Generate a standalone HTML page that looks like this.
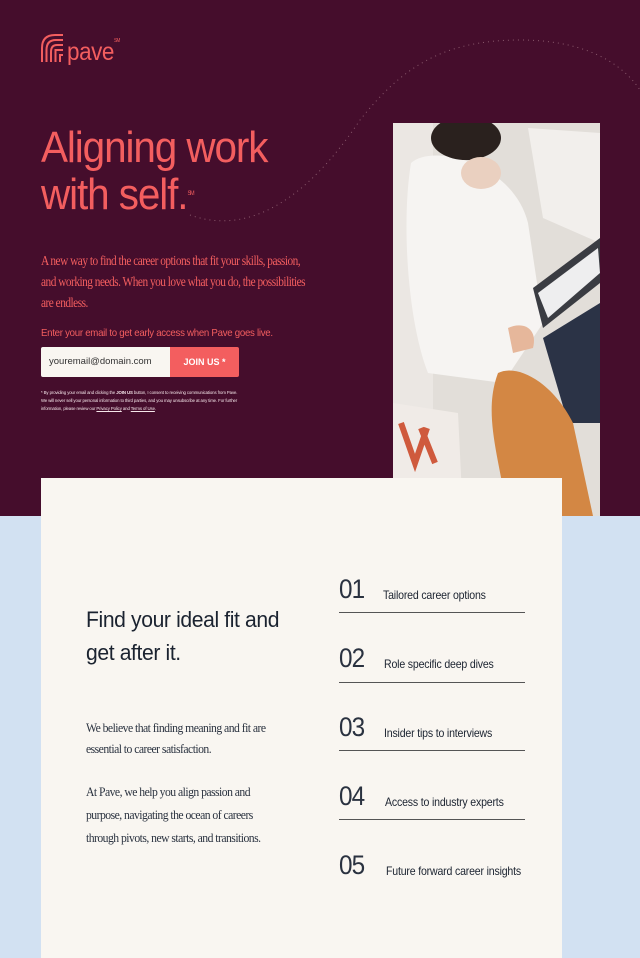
<!DOCTYPE html>
<html><head><meta charset="utf-8"><style>
*{margin:0;padding:0;box-sizing:border-box}
body{width:640px;height:958px;position:relative;overflow:hidden;font-family:"Liberation Sans",sans-serif;background:#d2e1f2}
.top{position:absolute;left:0;top:0;width:640px;height:516px;background:#450d2c}
.abs{position:absolute;white-space:nowrap;transform-origin:0 0}
.coral{color:#f35e5f}
.serif{font-family:"Liberation Serif",serif}
.card{position:absolute;left:41px;top:478px;width:521px;height:480px;background:#f9f6f1}
.num{position:absolute;left:339px;font-size:27px;color:#2a3240;letter-spacing:-1px;transform:scaleX(.9);transform-origin:0 0}
.lab{position:absolute;font-size:12px;color:#1b2330;letter-spacing:-0.2px;transform:scaleX(.88);transform-origin:0 0;white-space:nowrap}
.line{position:absolute;left:339px;width:186px;height:1px;background:#555}
</style></head><body>
<div class="top"></div>
<svg class="abs" style="left:0;top:0" width="640" height="516">
<path d="M190 215 C260 240 320 180 360 120 C400 70 440 40 520 40 C580 40 620 60 640 90" fill="none" stroke="#8a5a6d" stroke-width="1" stroke-dasharray="1 4"/>
<g fill="none" stroke="#f35e5f" stroke-width="2">
<path d="M42 62 V48 Q42 35 55 35 H63"/><path d="M46.5 62 V50 Q46.5 40 56 40 H63"/><path d="M51 62 V52 Q51 45 57 45 H63"/><path d="M55.5 62 V50 H63"/><path d="M60 62 V55 H63"/>
</g>
</svg>
<div class="abs coral" style="left:67px;top:38px;font-size:25px;letter-spacing:-0.5px;transform:scaleX(.9)">pave<sup style="font-size:5px;vertical-align:top">SM</sup></div>
<div class="abs coral" style="left:41px;top:124px;font-size:44px;line-height:47px;letter-spacing:-1.2px;transform:scaleX(.92)">Aligning work<br>with self.<sup style="font-size:6px;vertical-align:top">SM</sup></div>
<div class="abs coral serif" style="left:41px;top:250px;font-size:13.5px;line-height:21px;letter-spacing:-0.6px;transform:scaleX(.84)">A new way to find the career options that fit your skills, passion,<br>and working needs. When you love what you do, the possibilities<br>are endless.</div>
<div class="abs coral" style="left:41px;top:327px;font-size:10.5px;letter-spacing:-0.3px;transform:scaleX(.92)">Enter your email to get early access when Pave goes live.</div>
<div class="abs" style="left:41px;top:347px;width:130px;height:30px;background:#f9f6f1;border-radius:2px 0 0 2px;font-size:9.5px;color:#333;padding:9px 0 0 8px">youremail@domain.com</div>
<div class="abs" style="left:170px;top:347px;width:69px;height:30px;background:#f35e5f;border-radius:0 2px 2px 0;font-size:9px;color:#fff;font-weight:bold;text-align:center;padding-top:10px">JOIN US *</div>
<div class="abs" style="left:41px;top:389px;font-size:4.3px;line-height:8px;color:#f5e6ea;letter-spacing:-0.1px">* By providing your email and clicking the <b>JOIN US</b> button, I consent to receiving communications from Pave.<br>We will never sell your personal information to third parties, and you may unsubscribe at any time. For further<br>information, please review our <u>Privacy Policy</u> and <u>Terms of Use</u>.</div>
<svg class="abs" style="left:393px;top:123px" width="207" height="393">
<rect width="207" height="393" fill="#e2ded9"/>
<rect x="0" y="0" width="40" height="393" fill="#ebe7e3"/>
<path d="M135 5 L207 10 L207 120 L150 95 Z" fill="#f2efec"/>
<path d="M18 40 C40 20 120 40 135 100 L150 200 L110 260 L35 250 C15 200 8 100 18 40Z" fill="#f6f4f2"/>
<ellipse cx="73" cy="15" rx="35" ry="22" fill="#2a211e"/>
<ellipse cx="88" cy="50" rx="20" ry="16" fill="#ead0c0"/>
<path d="M140 165 L207 115 L207 160 L150 205 Z" fill="#3a3c42"/>
<path d="M145 170 L205 125 L207 150 L155 195 Z" fill="#eeeeef"/>
<path d="M150 215 L207 180 L207 300 L175 300 Z" fill="#2b3346"/>
<path d="M115 205 C130 198 145 205 140 225 L120 230 Z" fill="#e6b79b"/>
<path d="M105 250 C125 240 160 260 180 300 L200 393 L115 393 C105 330 90 290 105 250 Z" fill="#d38744"/>
<path d="M0 280 L65 290 L70 393 L0 393 Z" fill="#f0ebe7"/>
<path d="M8 300 L22 340 L34 305 M28 305 L42 340" stroke="#cf5a3d" stroke-width="6" fill="none"/>
</svg>
<div class="card"></div>
<div class="abs" style="left:86px;top:603px;font-size:22px;line-height:33px;color:#1b2330;letter-spacing:-0.4px;transform:scaleX(.96)">Find your ideal fit and<br>get after it.</div>
<div class="abs serif" style="left:86px;top:717px;font-size:13px;line-height:21px;color:#2b3340;letter-spacing:-0.6px;transform:scaleX(.9)">We believe that finding meaning and fit are<br>essential to career satisfaction.</div>
<div class="abs serif" style="left:86px;top:780px;font-size:13px;line-height:23px;color:#2b3340;letter-spacing:-0.6px;transform:scaleX(.9)">At Pave, we help you align passion and<br>purpose, navigating the ocean of careers<br>through pivots, new starts, and transitions.</div>
<div class="num" style="top:574px">01</div><div class="lab" style="left:383px;top:588px">Tailored career options</div><div class="line" style="top:612px"></div>
<div class="num" style="top:643px">02</div><div class="lab" style="left:384px;top:657px">Role specific deep dives</div><div class="line" style="top:682px"></div>
<div class="num" style="top:712px">03</div><div class="lab" style="left:384px;top:726px">Insider tips to interviews</div><div class="line" style="top:750px"></div>
<div class="num" style="top:781px">04</div><div class="lab" style="left:385px;top:795px">Access to industry experts</div><div class="line" style="top:819px"></div>
<div class="num" style="top:850px">05</div><div class="lab" style="left:386px;top:864px">Future forward career insights</div>
</body></html>
